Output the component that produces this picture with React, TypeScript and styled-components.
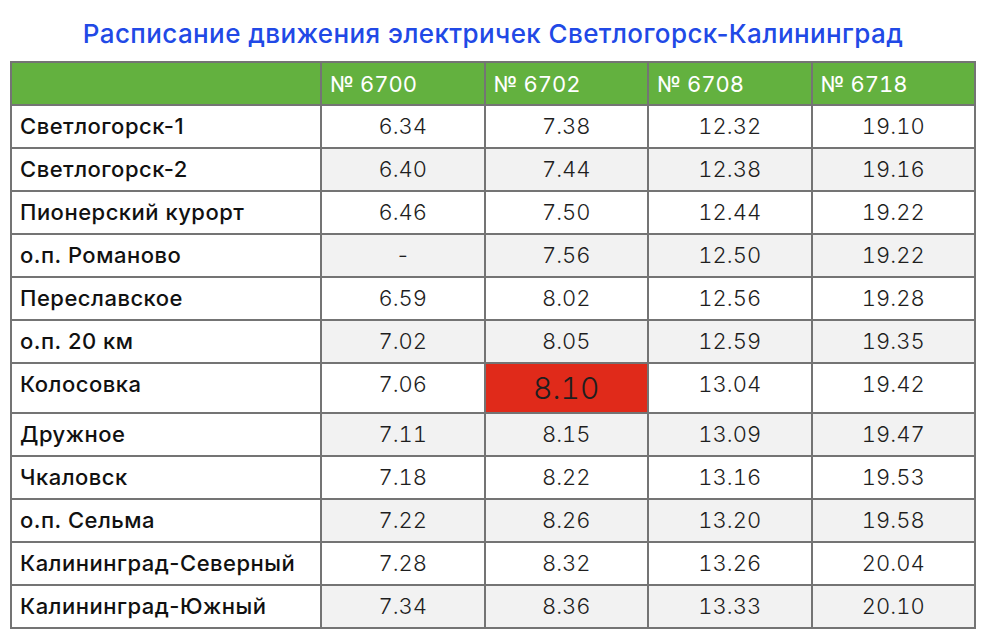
import React from "react";
import styled, { createGlobalStyle } from "styled-components";

const GlobalStyle = createGlobalStyle`
  html, body { margin: 0; padding: 0; background: #ffffff; }
  body { font-family: Inter, "Liberation Sans", Arial, sans-serif; }
`;

const Page = styled.div`
  width: 1000px;
  height: 642px;
  box-sizing: border-box;
  padding: 0 0 0 10px;
  display: flex;
  flex-direction: column;
`;

const Title = styled.h1`
  margin: 0;
  width: 966px;
  height: 61px;
  display: flex;
  align-items: center;
  justify-content: center;
  padding-top: 6px;
  box-sizing: border-box;
  font-family: Inter, "Liberation Sans", Arial, sans-serif;
  font-size: 26px;
  font-weight: 500;
  letter-spacing: 0.4px;
  color: #2149e6;
`;

const Table = styled.table`
  border-collapse: collapse;
  width: 966px;
  table-layout: fixed;
  font-family: Inter, "Liberation Sans", Arial, sans-serif;
`;

const HeadCell = styled.th`
  background: #63b13f;
  color: #ffffff;
  border: 2px solid #747474;
  font-size: 22px;
  font-weight: 400;
  text-align: left;
  padding: 9px 8px 7px;
  line-height: 25px;
  vertical-align: top;
  font-variant-numeric: tabular-nums;
`;

const LabelCell = styled.td`
  background: #ffffff;
  color: #111111;
  border: 2px solid #747474;
  font-size: 22px;
  font-weight: 500;
  letter-spacing: 0.5px;
  text-align: left;
  padding: 8px 8px 9px;
  line-height: 24px;
  vertical-align: top;
  white-space: nowrap;
`;

const TimeCell = styled.td<{ $shade: boolean; $hot: boolean }>`
  background: ${(p) => (p.$hot ? "#e02a1a" : p.$shade ? "#f2f2f2" : "#ffffff")};
  color: #1e1e1e;
  border: 2px solid #747474;
  font-size: ${(p) => (p.$hot ? "30px" : "22px")};
  line-height: ${(p) => (p.$hot ? "31px" : "24px")};
  font-weight: 300;
  font-variant-numeric: tabular-nums;
  text-align: center;
  padding: ${(p) => (p.$hot ? "9px 8px 8px" : "8px 8px 9px")};
  vertical-align: top;
`;

const trains = ["№ 6700", "№ 6702", "№ 6708", "№ 6718"];

const rows: [string, string[]][] = [
  ["Светлогорск-1", ["6.34", "7.38", "12.32", "19.10"]],
  ["Светлогорск-2", ["6.40", "7.44", "12.38", "19.16"]],
  ["Пионерский курорт", ["6.46", "7.50", "12.44", "19.22"]],
  ["о.п. Романово", ["-", "7.56", "12.50", "19.22"]],
  ["Переславское", ["6.59", "8.02", "12.56", "19.28"]],
  ["о.п. 20 км", ["7.02", "8.05", "12.59", "19.35"]],
  ["Колосовка", ["7.06", "8.10", "13.04", "19.42"]],
  ["Дружное", ["7.11", "8.15", "13.09", "19.47"]],
  ["Чкаловск", ["7.18", "8.22", "13.16", "19.53"]],
  ["о.п. Сельма", ["7.22", "8.26", "13.20", "19.58"]],
  ["Калининград-Северный", ["7.28", "8.32", "13.26", "20.04"]],
  ["Калининград-Южный", ["7.34", "8.36", "13.33", "20.10"]],
];

export default function App() {
  return (
    <>
      <GlobalStyle />
      <Page>
        <Title>Расписание движения электричек Светлогорск-Калининград</Title>
        <Table>
          <colgroup>
            <col style={{ width: 310 }} />
            <col />
            <col />
            <col />
            <col />
          </colgroup>
          <thead>
            <tr>
              <HeadCell />
              {trains.map((t) => (
                <HeadCell key={t}>{t}</HeadCell>
              ))}
            </tr>
          </thead>
          <tbody>
            {rows.map(([name, times], i) => (
              <tr key={name}>
                <LabelCell>{name}</LabelCell>
                {times.map((t, j) => (
                  <TimeCell
                    key={j}
                    $shade={i % 2 === 1}
                    $hot={name === "Колосовка" && j === 1}
                  >
                    {t}
                  </TimeCell>
                ))}
              </tr>
            ))}
          </tbody>
        </Table>
      </Page>
    </>
  );
}
